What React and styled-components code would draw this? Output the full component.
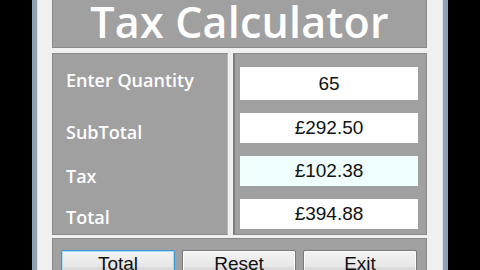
import React from 'react';
import styled, { createGlobalStyle } from 'styled-components';

const Global = createGlobalStyle`
  html, body {
    margin: 0;
    padding: 0;
    background: #000;
  }
  body {
    font-family: "Open Sans", "Liberation Sans", sans-serif;
  }
`;

// Filas del formulario: separación de la etiqueta y alto de la caja
const filas = [
  { label: 'Enter Quantity', valor: '65', sep: 14, alto: 33, activo: false },
  { label: 'SubTotal', valor: '£292.50', sep: 28, alto: 30, activo: false },
  { label: 'Tax', valor: '£102.38', sep: 20, alto: 30, activo: true },
  { label: 'Total', valor: '£394.88', sep: 17, alto: 30, activo: false },
];

export default function App() {
  return (
    <>
      <Global />
      <Pagina>
        <Ventana>
          <Titulo>Tax Calculator</Titulo>
          <Cuerpo>
            <Etiquetas>
              {filas.map((f) => (
                <Etiqueta key={f.label} $sep={f.sep}>{f.label}</Etiqueta>
              ))}
            </Etiquetas>
            <Campos>
              {filas.map((f) => (
                <Caja key={f.label} $alto={f.alto} $activo={f.activo}>
                  {f.valor}
                </Caja>
              ))}
            </Campos>
          </Cuerpo>
          <Botonera>
            <Boton $foco>Total</Boton>
            <Boton>Reset</Boton>
            <Boton>Exit</Boton>
          </Botonera>
        </Ventana>
      </Pagina>
    </>
  );
}

// Estilos
const Pagina = styled.div`
  width: 480px;
  height: 270px;
  overflow: hidden;
  display: flex;
  padding-left: 32px;
  box-sizing: border-box;
`;

const Ventana = styled.div`
  width: 416px;
  height: 290px;
  box-sizing: border-box;
  background: #f0f0f0;
  border-left: 5px solid #8fa0b4;
  border-right: 5px solid #8fa0b4;
  box-shadow: inset 1px 0 0 #d6dee8, inset -1px 0 0 #d6dee8;
  padding: 0 16px 0 15px;
  display: flex;
  flex-direction: column;
`;

const Panel = styled.div`
  background: #a0a0a0;
  border: 1px solid #8a8a8a;
  box-sizing: border-box;
`;

const Titulo = styled(Panel)`
  height: 48px;
  border-top: none;
  display: flex;
  align-items: center;
  justify-content: center;
  color: #fff;
  font-size: 43px;
  font-weight: 600;
  letter-spacing: 0.2px;
  padding-bottom: 4px;
`;

const Cuerpo = styled.div`
  margin-top: 5px;
  height: 182px;
  display: grid;
  grid-template-columns: 176px 194px;
  gap: 5px;
`;

const Etiquetas = styled(Panel)`
  display: flex;
  flex-direction: column;
  padding-left: 13px;
  border-right-color: #b8b8b8;
`;

const Etiqueta = styled.div`
  margin-top: ${(p) => p.$sep}px;
  height: 24px;
  line-height: 24px;
  color: #fff;
  font-size: 18px;
  font-weight: 600;
`;

const Campos = styled(Panel)`
  display: flex;
  flex-direction: column;
  gap: 13px;
  padding: 13px 8px 0 5px;
  border-left: 2px solid #7c7c7c;
`;

const Caja = styled.div`
  height: ${(p) => p.$alto}px;
  background: ${(p) => (p.$activo ? '#f0ffff' : '#fff')};
  display: flex;
  align-items: center;
  justify-content: center;
  color: #111;
  font-family: "Liberation Sans", Arial, sans-serif;
  font-size: 19px;
`;

const Botonera = styled(Panel)`
  margin-top: 3px;
  flex: 1;
  display: flex;
  gap: 7px;
  padding: 11px 8px 0 8px;
`;

const Boton = styled.div`
  width: 114px;
  height: 34px;
  box-sizing: border-box;
  border: 1px solid ${(p) => (p.$foco ? '#3c98d6' : '#7a7a7a')};
  box-shadow: ${(p) => (p.$foco ? 'inset 0 0 0 1px #a8dcf5' : 'inset 0 0 0 1px #fbfbfb')};
  border-radius: 2px;
  background: linear-gradient(#f4f4f4, #e6e6e6 50%, #dcdcdc 51%, #d2d2d2);
  display: flex;
  justify-content: center;
  padding-top: 2px;
  color: #111;
  font-family: "Liberation Sans", Arial, sans-serif;
  font-size: 19px;
`;
